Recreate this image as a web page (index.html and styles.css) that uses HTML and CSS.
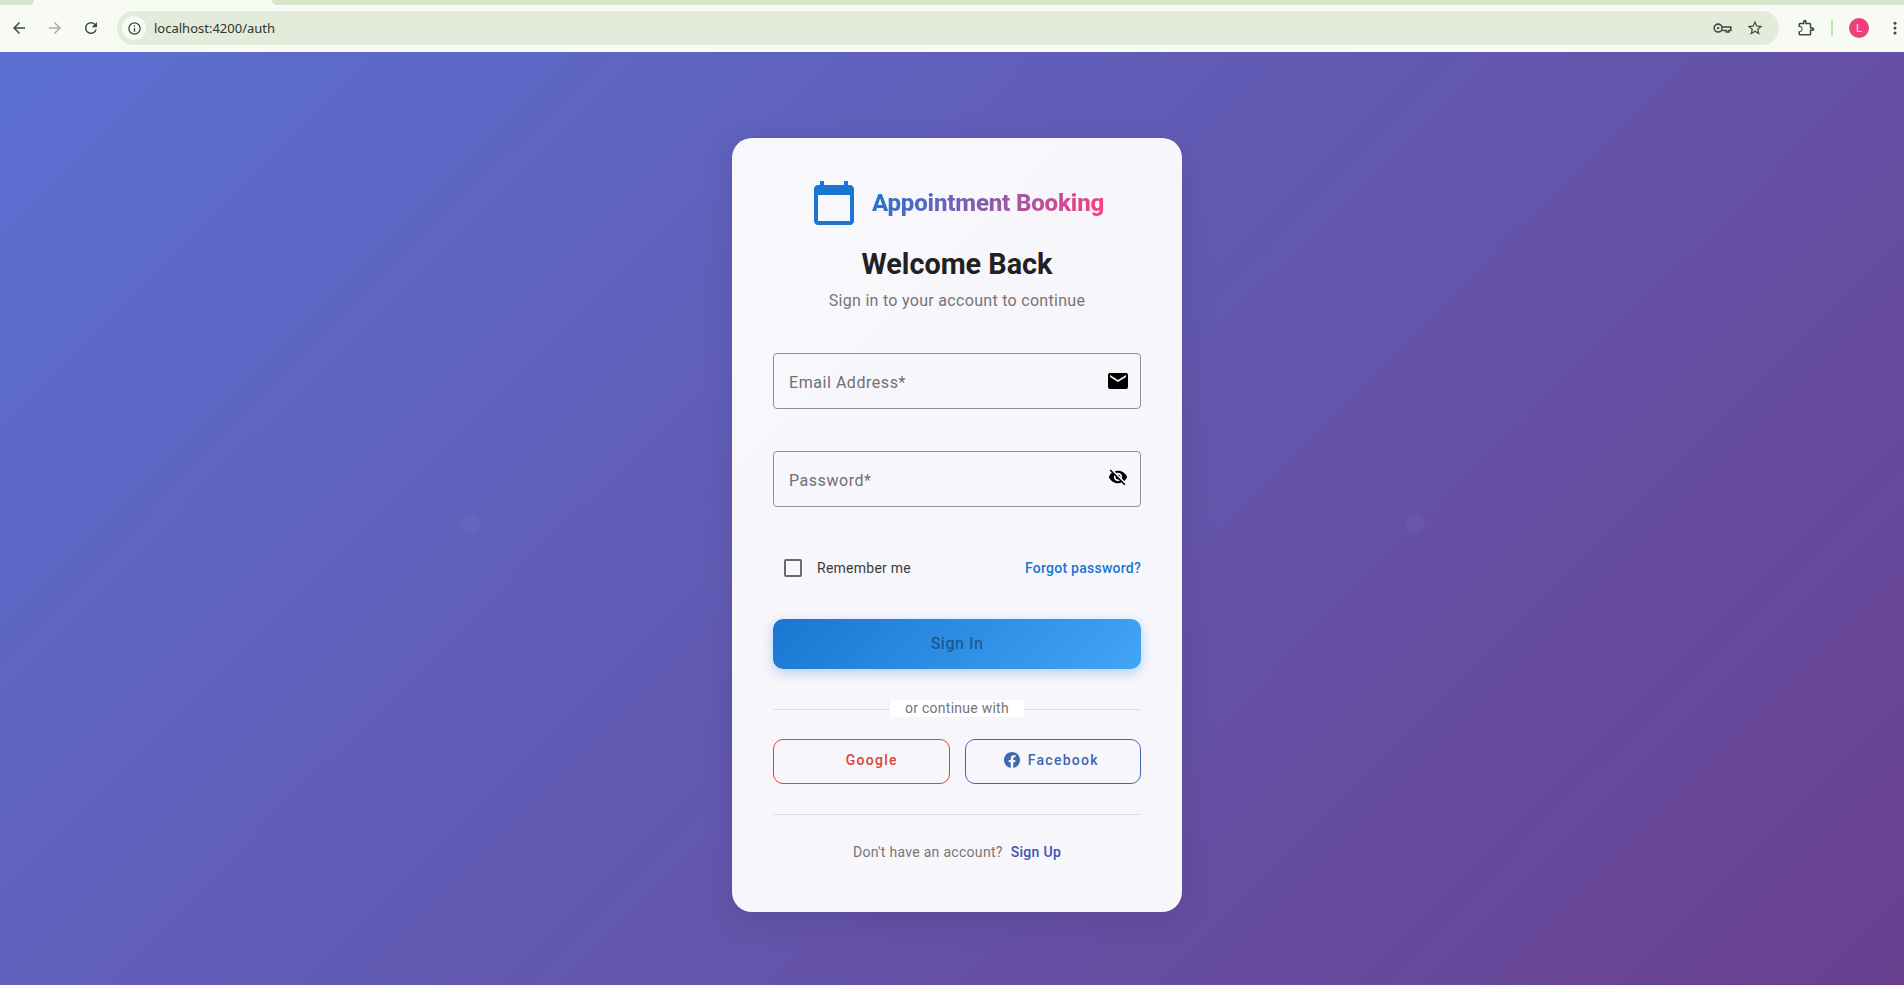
FILE: index.html
```html
<!DOCTYPE html>
<html lang="en">
<head>
<meta charset="utf-8">
<title>Appointment Booking</title>
<link rel="stylesheet" href="styles.css">
</head>
<body>
<header class="browser">
  <div class="tabstrip"><span class="tab-left"></span><span class="tab-active"></span><span class="tab-rest"></span></div>
  <div class="toolbar">
    <div class="nav">
      <svg class="tool" viewBox="0 0 24 24"><path d="M20 11H7.830l5.590-5.590L12 4l-8 8 8 8 1.410-1.410L7.830 13H20v-2z"/></svg>
      <svg class="tool tool-off" viewBox="0 0 24 24"><path d="M12 4l-1.410 1.410L16.170 11H4v2h12.170l-5.580 5.590L12 20l8-8z"/></svg>
      <svg class="tool" viewBox="0 0 24 24"><path d="M17.650 6.350A7.960 7.960 0 0 0 12 4a8 8 0 1 0 7.730 10h-2.080A6 6 0 1 1 12 6c1.660 0 3.140.69 4.220 1.780L13 11h7V4l-2.350 2.350z"/></svg>
    </div>
    <div class="omnibox">
      <span class="chip"><svg viewBox="0 0 24 24"><path d="M11 7h2v2h-2zm0 4h2v6h-2zm1-9a10 10 0 1 0 0 20 10 10 0 0 0 0-20zm0 18a8 8 0 1 1 0-16 8 8 0 0 1 0 16z"/></svg></span>
      <span class="url">localhost:4200/auth</span>
      <span class="omni-icons">
        <svg class="key" viewBox="0 0 24 16"><circle cx="6.500" cy="7.500" r="5"/><circle class="key-dot" cx="6.500" cy="7.500" r="1.500"/><path d="M11.500 6H22.500V10.500H20V12.500H17V10.500H11.500"/></svg>
        <svg class="tool" viewBox="0 0 24 24"><path d="M22 9.240l-7.190-.62L12 2 9.190 8.630 2 9.240l5.460 4.730L5.820 21 12 17.270 18.180 21l-1.630-7.030L22 9.240zM12 15.400l-3.760 2.270 1-4.280-3.320-2.880 4.380-.38L12 6.100l1.710 4.040 4.380.38-3.320 2.880 1 4.280L12 15.400z"/></svg>
      </span>
    </div>
    <div class="actions">
      <svg class="tool" viewBox="0 0 24 24"><path d="M20.500 11H19V7a2 2 0 0 0-2-2h-4V3.500a2.500 2.500 0 0 0-5 0V5H4a2 2 0 0 0-2 2v3.800h1.500a2.700 2.700 0 0 1 0 5.400H2V20a2 2 0 0 0 2 2h13a2 2 0 0 0 2-2v-4h1.500a2.500 2.500 0 0 0 0-5zM17 20H4v-2.100a4.500 4.500 0 0 0 0-8.800V7h6V4h1v3h6v6h3v1h-3v6z"/></svg>
      <span class="sep"></span>
      <span class="avatar">L</span>
      <svg class="tool dots" viewBox="0 0 24 24"><circle cx="12" cy="5.500" r="2"/><circle cx="12" cy="12" r="2"/><circle cx="12" cy="18.500" r="2"/></svg>
    </div>
  </div>
</header>

<main class="page">
  <span class="blob blob-left"></span>
  <span class="blob blob-right"></span>
  <section class="card">
    <div class="brand">
      <svg class="brand-icon" viewBox="0 0 24 24"><path d="M20 3h-1V1h-2v2H7V1H5v2H4c-1.100 0-2 .9-2 2v16c0 1.100.9 2 2 2h16c1.100 0 2-.9 2-2V5c0-1.100-.9-2-2-2zm0 18H4V8h16v13z"/></svg>
      <span class="brand-name">Appointment Booking</span>
    </div>
    <h1 class="title">Welcome Back</h1>
    <p class="subtitle">Sign in to your account to continue</p>

    <div class="field">
      <span class="field-label">Email Address*</span>
      <svg class="field-icon" viewBox="0 0 24 24"><path d="M20 4H4c-1.100 0-1.990.9-1.990 2L2 18c0 1.100.9 2 2 2h16c1.100 0 2-.9 2-2V6c0-1.100-.9-2-2-2zm0 4l-8 5-8-5V6l8 5 8-5v2z"/></svg>
    </div>
    <div class="field">
      <span class="field-label">Password*</span>
      <svg class="field-icon eye" viewBox="0 0 24 24"><path d="M12 7c2.760 0 5 2.240 5 5 0 .65-.13 1.260-.36 1.830l2.920 2.920c1.510-1.260 2.700-2.890 3.430-4.750-1.730-4.390-6-7.500-11-7.500-1.400 0-2.740.25-3.980.7l2.160 2.160C10.740 7.130 11.350 7 12 7zM2 4.270l2.280 2.280.46.46A11.800 11.800 0 0 0 1 12c1.730 4.390 6 7.500 11 7.500 1.550 0 3.030-.3 4.380-.84l.42.42L19.730 22 21 20.730 3.270 3 2 4.270zM7.530 9.800l1.550 1.550c-.05.21-.08.430-.08.650 0 1.660 1.340 3 3 3 .22 0 .44-.03.65-.08l1.550 1.550c-.67.330-1.410.53-2.200.53-2.760 0-5-2.240-5-5 0-.79.200-1.530.53-2.200zm4.310-.78l3.150 3.150.02-.16c0-1.660-1.340-3-3-3l-.17.010z"/></svg>
    </div>

    <div class="options">
      <label class="remember"><span class="checkbox"></span><span>Remember me</span></label>
      <a class="forgot">Forgot password?</a>
    </div>

    <button class="signin">Sign In</button>

    <div class="divider"><span class="divider-text">or continue with</span></div>

    <div class="social">
      <button class="social-btn google"><span class="icon-slot"></span>Google</button>
      <button class="social-btn facebook">
        <svg class="icon-slot" viewBox="0 0 24 24"><path d="M24 12.070C24 5.400 18.630 0 12 0S0 5.400 0 12.070C0 18.100 4.390 23.100 10.130 24v-8.440H7.080v-3.490h3.050V9.410c0-3.020 1.790-4.690 4.530-4.690 1.310 0 2.680.24 2.680.24v2.970h-1.510c-1.490 0-1.960.93-1.960 1.880v2.260h3.330l-.53 3.490h-2.800V24C19.610 23.100 24 18.100 24 12.070z"/></svg>
        Facebook
      </button>
    </div>

    <div class="footer">
      <span>Don't have an account?</span><a class="signup">Sign Up</a>
    </div>
  </section>
</main>
</body>
</html>
```
FILE: styles.css
```css
* { box-sizing: border-box; }
html, body { height: 100%; }
body {
  margin: 0;
  display: flex;
  flex-direction: column;
  overflow: hidden;
  font-family: Roboto, "Liberation Sans", sans-serif;
}

/* browser chrome */
.browser { height: 52px; flex: none; background: #f7fbf3; }
.tabstrip { display: flex; height: 5px; }
.tab-left { width: 34px; background: #d6e6cc; border-bottom-right-radius: 5px; }
.tab-active { width: 238px; }
.tab-rest { flex: 1; background: #d6e6cc; border-bottom-left-radius: 5px; }
.toolbar { height: 47px; display: flex; align-items: center; padding-bottom: 1px; }
.tool { width: 18px; height: 18px; fill: #3f4a3d; flex: none; }
.tool-off { fill: #a9aea6; }
.key { width: 19px; height: 13px; fill: none; stroke: #3f4a3d; stroke-width: 2; flex: none; }
.key-dot { fill: #3f4a3d; stroke: none; }
.nav { width: 117px; display: flex; gap: 18px; padding-left: 10px; }
.omnibox {
  width: 1662px;
  height: 34px;
  border-radius: 17px;
  background: #e3ebdb;
  display: flex;
  align-items: center;
  padding-left: 5px;
}
.chip {
  width: 24px; height: 24px; border-radius: 50%;
  background: #f7fbf3;
  display: flex; align-items: center; justify-content: center;
}
.chip svg { width: 15px; height: 15px; fill: #3a4339; }
.url { margin-left: 8px; font-family: "Noto Sans", sans-serif; font-size: 13px; color: #2d352b; flex: 1; }
.omni-icons { display: flex; gap: 14px; align-items: center; padding-right: 15px; }
.actions { flex: 1; display: flex; align-items: center; padding-left: 18px; }
.sep { width: 2px; height: 16px; background: #b5e8a5; margin-left: 16px; }
.avatar {
  width: 20px; height: 20px; border-radius: 50%;
  background: #ec407a; color: #fde; font-size: 11px;
  display: flex; align-items: center; justify-content: center;
  margin-left: 16px;
}
.dots { margin-left: 17px; margin-right: -3px; }

/* page */
.page {
  flex: 1;
  position: relative;
  display: flex;
  justify-content: center;
  align-items: flex-start;
  padding: 86px 0 0 10px;
  background: linear-gradient(135deg, #5b70d2 0%, #6a408f 100%);
}
.blob { position: absolute; top: 462px; width: 20px; height: 20px; border-radius: 50%; background: rgba(255,255,255,.035); }
.blob-left { left: 460px; }
.blob-right { left: 1405px; }

.card {
  width: 450px;
  height: 774px;
  padding: 41px;
  border-radius: 20px;
  background: rgba(255,255,255,.95);
  box-shadow: 0 8px 32px rgba(0,0,0,.1);
  position: relative;
  display: flex;
  flex-direction: column;
}
.brand { display: flex; align-items: center; justify-content: center; gap: 14px; height: 48px; }
.brand-icon { width: 48px; height: 48px; fill: #1976d2; flex: none; }
.brand-name {
  font-size: 24px;
  font-weight: 800;
  letter-spacing: -.15px;
  background: linear-gradient(135deg, #1976d2, #ff4081);
  -webkit-background-clip: text;
  background-clip: text;
  color: transparent;
}
.title { margin: 20px 0 0; text-align: center; font-size: 28.8px; line-height: 34px; font-weight: 700; color: #212121; }
.subtitle { margin: 10px 0 0; text-align: center; font-size: 16px; line-height: 20px; color: #757575; letter-spacing: .3px; }

.field {
  height: 56px;
  margin-top: 42px;
  border: 1px solid #8f8f95;
  border-radius: 4px;
  display: flex;
  align-items: center;
  justify-content: space-between;
  padding: 0 10px 0 15px;
}
.field-label { font-size: 16px; letter-spacing: .55px; color: #6f6f74; padding-top: 2px; }
.field-icon { width: 24px; height: 24px; fill: #000; }
.eye { width: 20px; height: 20px; margin: -4px 2px 0 0; }

.options { display: flex; align-items: center; justify-content: space-between; margin-top: 44px; height: 34px; }
.remember { display: flex; align-items: center; padding-left: 11px; font-size: 14px; letter-spacing: .25px; color: #3c3c3c; }
.checkbox { width: 18px; height: 18px; border: 2px solid #6b6b6b; border-radius: 2px; margin-right: 15px; }
.forgot { font-size: 14px; font-weight: 500; letter-spacing: .25px; color: #1976d2; }

.signin {
  height: 50px;
  margin-top: 34px;
  padding-bottom: 3px;
  flex: none;
  border: 0;
  border-radius: 10px;
  background: linear-gradient(135deg, #1976d2, #42a5f5);
  box-shadow: 0 4px 12px rgba(25,118,210,.3);
  font: 500 16px Roboto, sans-serif;
  letter-spacing: .5px;
  color: rgba(0,0,0,.38);
}

.divider { height: 1px; margin-top: 40px; background: #dfdfe3; display: flex; justify-content: center; align-items: center; }
.divider-text { background: #fff; padding: 0 15px; font-size: 14px; line-height: 17px; letter-spacing: .25px; color: #757575; margin-top: -2px; }

.social { display: flex; gap: 15px; margin-top: 29px; }
.social-btn {
  flex: 1;
  height: 45px;
  background: transparent;
  border: 1px solid;
  border-radius: 10px;
  display: flex; align-items: center; justify-content: center;
  gap: 8px;
  font: 500 14px Roboto, sans-serif;
  letter-spacing: 1.25px;
  padding: 0 3px 4px 0;
}
.icon-slot { width: 16px; height: 16px; flex: none; fill: currentColor; }
.google { color: #db4437; }
.facebook { color: #4267b2; }

.footer {
  margin-top: 30px;
  padding-top: 29px;
  border-top: 1px solid #dfdfe3;
  display: flex; justify-content: center; gap: 8px;
  font-size: 14px; line-height: 17px; letter-spacing: .3px; color: #757575;
}
.signup { font-weight: 500; color: #3f51b5; }
```
